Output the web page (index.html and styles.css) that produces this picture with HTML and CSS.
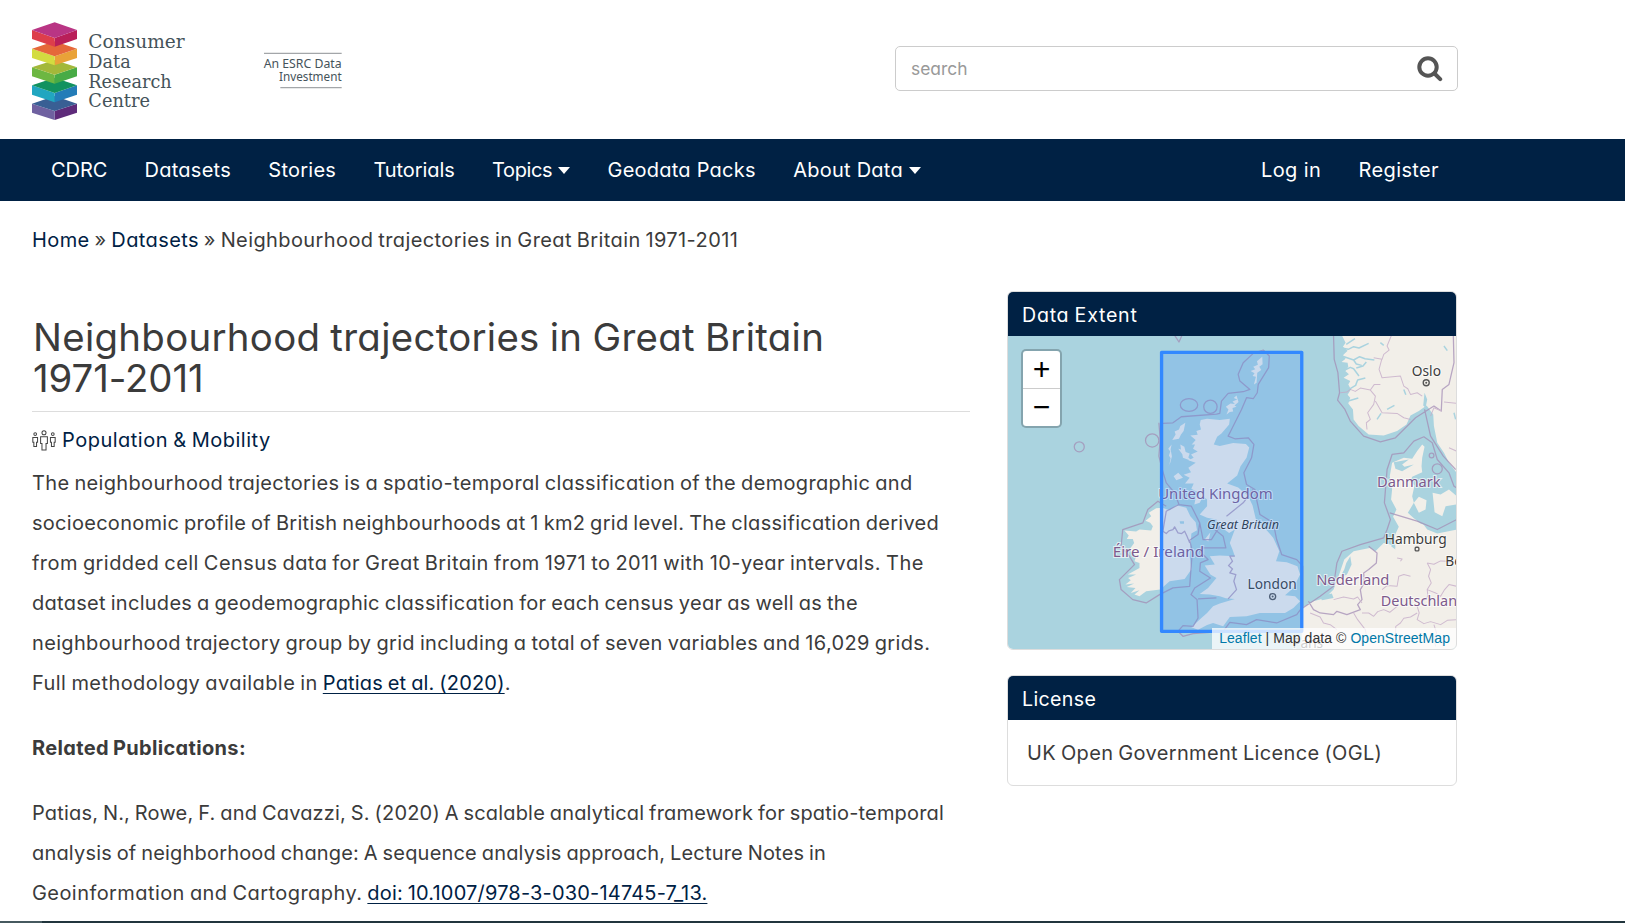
FILE: index.html
```html
<!DOCTYPE html>
<html lang="en">
<head>
<meta charset="utf-8">
<title>Neighbourhood trajectories in Great Britain 1971-2011 | CDRC Data</title>
<link rel="stylesheet" href="styles.css">
</head>
<body>
<header class="masthead">
  <svg class="logo" viewBox="0 0 1050 417" width="350" height="139" role="img" aria-label="Consumer Data Research Centre">
    <path fill="#5e2b7a" d="M164 333 231 311V338L164 360Z"/><path fill="#6f61a0" d="M96 311 164 333V360L96 338Z"/><path fill="#395f94" d="M164 288 231 311 164 333 96 311Z"/>
    <path fill="#237cb8" d="M164 279 231 256V284L164 307Z"/><path fill="#21a6c0" d="M96 256 164 279V307L96 284Z"/><path fill="#12925f" d="M164 233 231 256 164 279 96 256Z"/>
    <path fill="#48ab46" d="M164 224 231 202V229L164 251Z"/><path fill="#6db742" d="M96 202 164 224V251L96 229Z"/><path fill="#a3b83a" d="M164 180 231 202 164 224 96 202Z"/>
    <path fill="#e9a238" d="M164 169 231 146V174L164 196Z"/><path fill="#d3dc40" d="M96 146 164 169V196L96 174Z"/><path fill="#e5683a" d="M164 124 231 146 164 169 96 146Z"/>
    <path fill="#b91f59" d="M164 114 231 90V117L164 140Z"/><path fill="#dd3e4b" d="M96 90 164 114V140L96 117Z"/><path fill="#b93584" d="M164 67 231 90 164 114 96 90Z"/>
    <g class="logo-name">
      <text x="265" y="145" textLength="289" lengthAdjust="spacingAndGlyphs">Consumer</text>
      <text x="265" y="204" textLength="127" lengthAdjust="spacingAndGlyphs">Data</text>
      <text x="265" y="263" textLength="250" lengthAdjust="spacingAndGlyphs">Research</text>
      <text x="265" y="322" textLength="185" lengthAdjust="spacingAndGlyphs">Centre</text>
    </g>
    <path fill="none" stroke="#a3a6a9" stroke-width="4" d="M792 160H1025M841 263H1025"/>
    <g class="logo-tag">
      <text x="791" y="204" textLength="234" lengthAdjust="spacingAndGlyphs">An ESRC Data</text>
      <text x="837" y="244" textLength="188" lengthAdjust="spacingAndGlyphs">Investment</text>
    </g>
  </svg>
  <form class="search">
    <input class="search-input" type="text" placeholder="search" aria-label="search">
    <svg class="search-icon" viewBox="0 0 26 26" width="26" height="26"><circle cx="11" cy="11" r="8.7"/><path d="M17.5 17.5 23.2 23.2"/></svg>
  </form>
</header>

<nav class="navbar">
  <ul class="nav">
    <li><a class="flat">CDRC</a></li>
    <li><a>Datasets</a></li>
    <li><a>Stories</a></li>
    <li><a class="flat">Tutorials</a></li>
    <li><a class="narrow">Topics</a><i class="caret"></i></li>
    <li><a>Geodata Packs</a></li>
    <li><a>About Data</a><i class="caret"></i></li>
  </ul>
  <ul class="nav account">
    <li><a>Log in</a></li>
    <li><a>Register</a></li>
  </ul>
</nav>

<div class="breadcrumb"><a>Home</a> » <a>Datasets</a> » Neighbourhood trajectories in Great Britain 1971-2011</div>

<div class="page">
  <main class="content">
    <h1 class="title">Neighbourhood trajectories in Great Britain<br><span class="flat">1971-2011</span></h1>
    <div class="topic">
      <svg class="topic-icon" viewBox="0 0 70 62" width="24" height="21"><circle cx="35" cy="8" r="6"/><path d="M25 20H45V40H41V59H29V40H25Z"/><circle cx="9" cy="12" r="4"/><path d="M2 22H16V36H13V49H5V36H2Z"/><circle cx="61" cy="12" r="4"/><path d="M54 22H68V36H65V49H57V36H54Z"/></svg>
      <a>Population &amp; Mobility</a>
    </div>
    <p class="text">
      The neighbourhood trajectories is a spatio-temporal classification of the demographic and<br>
      <span class="snug">socioeconomic profile of British neighbourhoods at 1 km2 grid level. The classification derived</span><br>
      <span class="loose">from gridded cell Census data for Great Britain from 1971 to 2011 with 10-year intervals. The</span><br>
      <span class="snug">dataset includes a geodemographic classification for each census year as well as the</span><br>
      neighbourhood trajectory group by grid including a total of seven variables and 16,029 grids.<br>
      <span class="loose">Full methodology available in</span> <span class="tight"><a class="link">Patias et al. (2020)</a>.</span>
    </p>
    <p class="text"><strong>Related Publications:</strong></p>
    <p class="text">
      <span class="tight">Patias, N., Rowe, F. and Cavazzi, S. (2020) A scalable analytical framework for spatio-temporal</span><br>
      <span class="tight">analysis of neighborhood change: A sequence analysis approach, Lecture Notes in</span><br>
      <span class="loose">Geoinformation and Cartography.</span> <a class="link tight">doi: 10.1007/978-3-030-14745-7_13.</a>
    </p>
  </main>

  <aside class="sidebar">
    <section class="panel">
      <h2 class="panel-head wide">Data Extent</h2>
      <div class="map">
        <svg class="map-canvas" viewBox="-333 20 1339 938" preserveAspectRatio="none">
          <g class="land">
            <path d="M243 272 262 268 300 272 330 268 328 285 305 312 292 322 282 345 300 350 340 341 378 344 388 354 380 385 362 410 352 438 322 462 355 474 385 500 398 528 408 570 440 602 460 625 478 665 468 695 500 698 532 710 540 735 520 775 495 797 525 800 540 815 520 835 495 850 420 850 380 860 330 862 310 890 280 880 262 886 235 900 215 893 245 865 262 850 280 830 300 822 345 808 318 806 300 800 270 795 240 793 265 775 290 745 272 735 255 708 285 705 270 680 300 678 345 680 338 660 330 640 345 600 328 610 300 590 290 570 262 565 240 555 262 530 262 510 250 500 240 520 224 525 228 505 240 490 226 484 215 478 222 462 196 462 210 445 192 436 214 428 206 415 228 400 206 392 222 385 214 375 234 366 220 358 226 345 216 345 228 332 212 318 234 316 230 305 244 300 240 285Z"/>
            <path d="M197 280 182 290 178 300 165 306 168 315 158 332 178 328 184 315 192 305ZM156 345 146 358 152 366 148 378 153 386 150 402 146 410 152 400 157 380 153 360ZM176 358 184 360 182 345 194 352 198 368 210 372 206 384 218 395 204 390 190 385 188 374ZM427 82 411 96 414 106 400 112 406 120 392 125 404 132 398 140 408 142 402 165 410 160 412 130 424 122 418 112 428 105ZM350 198 342 206 352 210 338 216 345 224 332 222 318 232 326 240 320 255 330 248 340 246 338 236 350 232 344 228 356 218ZM162 440 176 430 190 445 170 452ZM255 630 272 608 266 636Z"/>
            <path d="M128 535 150 542 170 527 200 535 212 560 228 578 232 602 215 612 213 640 210 680 215 720 195 748 150 755 122 780 80 785 60 800 45 795 60 782 34 790 48 775 22 772 44 762 18 765 34 752 26 745 50 735 25 735 60 715 60 700 45 695 50 680 30 660 44 640 40 628 22 628 28 618 15 603 50 606 60 600 95 603 100 590 92 580 78 574 95 560 88 550 95 545 110 536Z"/>
            <path d="M665 18H1008V430L985 400 970 370 950 340 940 290 938 255 918 228 895 245 870 258 858 285 830 305 790 318 745 315 715 290 700 270 698 240 684 222 690 205 682 196 692 180 684 165 690 155 670 145 686 135 675 125 684 112 682 100 664 98 676 88 668 78 682 64 668 52 676 40Z"/>
            <path d="M905 345 912 352 905 385 903 410 905 428 875 442 870 455 882 468 875 500 880 520 862 550 880 566 900 582 950 600 1008 590V959H545V835L580 815 615 805 640 780 655 740 672 690 700 665 748 655 765 665 790 640 810 645 825 655 822 620 835 592 818 562 828 540 812 510 815 480 808 440 815 400 850 385 875 388 890 365ZM880 520 895 502 918 512 915 540 895 550ZM936 490 960 495 985 480 1008 500 1008 525 975 530 965 560 942 548Z"/>
          </g>
          <path class="water" d="M678 700 690 680 694 705 680 735 658 745 672 720ZM820 398 865 390 845 405 852 412 880 405 845 425 825 418ZM905 580 920 600 950 612 1008 600V560L960 580 930 560ZM600 800 635 792 640 805 605 812ZM180 575H193V583H182ZM812 650 825 660 820 640ZM915 235 920 210 912 190 908 228Z"/>
          <path class="fjord" d="M660 55 684 60 700 52 716 56 745 42M665 80 700 92 718 82 734 88 762 92M700 92 708 104 724 108M668 125 690 114 700 118 716 140M686 180 706 168 712 152 735 146M678 45 704 28M684 215 714 206M708 116 728 110 738 98M770 270 782 252M800 240 822 228M970 50 980 64M1000 250 1005 270M850 180 856 196M780 40 790 48"/>
          <g class="border">
            <path d="M640 18 642 90 653 130 658 190 652 212 674 240 690 275 730 320 780 337 825 325 885 265 940 230 962 245 965 180 985 165 1000 100 998 18M912 240 930 320 968 380 1005 420M130 282 160 280 185 262 290 254 300 252 305 215 325 192 370 187 390 180 360 155 355 135 370 100 400 72 430 62 448 80 446 115 415 165 412 190 400 208 380 205 365 240 335 300 325 320 345 328 385 325 402 345 395 385 372 430 380 465 405 480 410 510 420 555 460 580 470 630 485 675 530 690 548 710 548 830 530 855 470 880 410 870 380 885 330 878 310 905 220 912 190 920 175 905 190 888 220 890 235 865 232 810 214 795 225 775 272 745 240 725 242 700 265 690 240 665 245 655 290 655 318 655 310 620 285 600"/>
            <path d="M118 280 122 330 118 380 128 420 140 460 165 490 178 525 215 530 240 580 235 615 210 632 218 665 210 770 160 775 120 795 80 820 40 810 5 780 0 750 45 705 30 680 5 650 10 600 70 580 85 540 115 515 140 530M240 580 250 630 275 630 300 590M130 605 140 612 148 604 160 600 165 592 175 610 186 612 195 605 202 620 210 640M178 525 140 545 130 605M400 480 370 520 320 560M345 680 330 680 338 695 326 708 338 718 330 730 348 735 342 755 350 780 325 808M235 808 290 805M548 835 600 800 640 770 650 700 665 665 720 645 790 625 800 600 810 570 792 520 800 420 815 375 850 370 880 335 910 322 935 340 950 390 985 430 1000 470 1008 475M808 550 890 575 950 600 1008 570M745 650 770 670 768 700 745 720 730 730 732 760 720 780 725 810 712 825 720 840 680 855 650 845 640 855 600 850 580 840 565 815"/>
            <path d="M813 18 800 50 806 62 790 75 785 90 760 85M784 90 776 120 785 145 840 140 850 170 862 178 870 195 890 190 905 200M660 190 680 188 690 180 705 186 720 176 750 182 762 165 780 165M750 182 765 200 760 225 742 250 750 270 738 280 740 300M765 215 785 250 830 252 850 265 870 270M962 245 940 235 930 260M1008 222 970 218M985 355 1008 365M785 780 800 768 830 770 835 740 850 735 870 740M725 850 745 850 760 860 772 846 790 840 808 848 830 830M920 700 930 720 924 740 932 760 920 780 922 800 890 830 896 850 890 870 910 882 930 876 960 885 980 872 1008 870M920 700 940 704 960 694 980 695 1008 700M830 685 845 688 840 695M640 810 670 802 700 808 712 802 725 820M570 850 600 862 610 880 630 885 650 900M700 850 712 870 735 900 740 930M890 850 870 862 850 866 840 880 826 890 825 920M940 885 948 910 940 925 945 950M920 780 945 790 960 800 972 780 985 765 1008 770" class="thin"/>
            <ellipse cx="208" cy="227" rx="26" ry="19"/><circle cx="272" cy="232" r="20"/><circle cx="98" cy="333" r="20"/><circle cx="-120" cy="352" r="15"/><circle cx="950" cy="418" r="15"/><circle cx="933" cy="378" r="7"/><path d="M165 18 178 38 187 18"/>
          </g>
          <g class="country">
            <text x="116" y="509" textLength="342" lengthAdjust="spacingAndGlyphs">United Kingdom</text><text x="-20" y="681" textLength="273" lengthAdjust="spacingAndGlyphs">Éire / Ireland</text><text x="770" y="473" textLength="190" lengthAdjust="spacingAndGlyphs">Danmark</text><text x="588" y="765" textLength="219" lengthAdjust="spacingAndGlyphs">Nederland</text><text x="781" y="828" textLength="255" lengthAdjust="spacingAndGlyphs">Deutschland</text>
          </g>
          <text class="island" x="262" y="598" textLength="215" lengthAdjust="spacingAndGlyphs">Great Britain</text>
          <g class="city"><text x="874" y="140" textLength="87" lengthAdjust="spacingAndGlyphs">Oslo</text><text x="793" y="644" textLength="185" lengthAdjust="spacingAndGlyphs">Hamburg</text><text x="383" y="779" textLength="147" lengthAdjust="spacingAndGlyphs">London</text><text x="974" y="709">Berlin</text><text x="517" y="954" textLength="92">Paris</text></g>
          <g class="town"><circle cx="917" cy="160" r="9"/><circle class="dot" cx="917" cy="160" r="3"/><circle cx="458" cy="801" r="9"/><circle class="dot" cx="458" cy="801" r="3"/><rect x="884" y="653" width="11" height="11" rx="3"/></g>
          <rect class="extent" x="126" y="69" width="419" height="836"/>
        </svg>
        <div class="zoom"><a>+</a><a>−</a></div>
        <div class="attribution"><a>Leaflet</a> | Map data © <a>OpenStreetMap</a></div>
      </div>
    </section>
    <section class="panel">
      <h2 class="panel-head">License</h2>
      <div class="panel-body">UK Open Government Licence (OGL)</div>
    </section>
  </aside>
</div>
<div class="footer-edge"><span></span></div>
</body>
</html>
```
FILE: styles.css
```css
* { box-sizing: border-box; }
body {
  margin: 0;
  height: 923px;
  overflow: hidden;
  position: relative;
  background: #fff;
  color: #3b3b3b;
  font-family: Inter, "Noto Sans", sans-serif;
  font-size: 20px;
  font-feature-settings: "cv11", "calt" 0;
  letter-spacing: .34px;
  word-spacing: -1px;
}
svg { letter-spacing: 0; word-spacing: 0; }
.flat { letter-spacing: -.08px; }
.narrow { letter-spacing: -.4px; }
.tight { letter-spacing: .18px; }
.snug { letter-spacing: .28px; }
.loose { letter-spacing: .43px; }
.wide { letter-spacing: .75px; }
.masthead { display: flex; height: 139px; }
.logo-name { font: 56px "DejaVu Serif", serif; fill: #45535a; }
.logo-tag { font: 37px "Noto Sans", sans-serif; fill: #45535a; }
.search {
  display: flex;
  align-items: center;
  width: 563px;
  height: 45px;
  margin: 46px 0 0 545px;
  padding: 0 14px 0 15px;
  border: 1px solid #ccc;
  border-radius: 5px;
}
.search-input { flex: 1; min-width: 0; padding: 0; border: 0; outline: 0; font: inherit; font-size: 17.4px; }
.search-input::placeholder { color: #999; opacity: 1; }
.search-icon { fill: none; stroke: #555; stroke-width: 4; stroke-linecap: round; }
.navbar {
  display: flex;
  justify-content: space-between;
  height: 62px;
  padding: 0 186px 0 51px;
  background: #002144;
  color: #fff;
  letter-spacing: .24px;
  word-spacing: 0;
}
.nav { display: flex; align-items: center; gap: 37.4px; margin: 0; padding: 0; list-style: none; }
.account { letter-spacing: .38px; }
.nav li { display: flex; align-items: center; white-space: nowrap; }
.caret { margin-left: 6px; border: 6px solid transparent; border-top: 7px solid #fff; border-bottom: 0; }
.breadcrumb { height: 90px; padding: 20px 0 0 32px; line-height: 38px; letter-spacing: .4px; word-spacing: -1.2px; }
.breadcrumb a, .topic a, .link { color: #002144; }
.topic a { letter-spacing: .5px; }
.page { display: flex; align-items: flex-start; gap: 37px; padding-left: 32px; white-space: nowrap; }
.content { width: 938px; padding-top: 26px; }
.title {
  height: 95px;
  margin: 0;
  padding-left: 1px;
  border-bottom: 1px solid #ddd;
  font-size: 38.4px;
  font-weight: 400;
  line-height: 41px;
  letter-spacing: .3px;
}
.topic { display: flex; align-items: center; gap: 6px; height: 56px; }
.topic-icon { fill: none; stroke: #444; stroke-width: 3; }
.text { margin: -5px 0 25px; line-height: 40px; }
.text + .text { margin-top: 0; }
.link { text-decoration: underline; text-decoration-thickness: 1px; text-underline-offset: 3px; }
.sidebar { display: flex; flex-direction: column; gap: 25px; width: 450px; }
.panel { border: 1px solid #ddd; border-radius: 6px; overflow: hidden; }
.panel-head {
  height: 44px;
  margin: 0;
  padding: 0 14px;
  background: #002144;
  color: #fff;
  font-size: 19.6px;
  font-weight: 400;
  line-height: 46px;
}
.panel-body { height: 65px; padding: 0 19px; line-height: 66px; }
.map { position: relative; height: 313px; background: #aad3df; }
.map-canvas { display: block; width: 448px; height: 313px; }
.land { fill: #f2efe9; }
.water { fill: #aad3df; }
.fjord { fill: none; stroke: #aad3df; stroke-width: 4.5; stroke-linejoin: round; }
.border { fill: none; stroke: #a38db5; stroke-width: 3.8; stroke-linejoin: round; opacity: .75; }
.thin { stroke: #c3a9c6; stroke-width: 3; }
.country, .city, .island {
  font-family: "Noto Sans", sans-serif;
  font-size: 41px;
  stroke: #fff;
  stroke-opacity: .65;
  stroke-width: 6;
  paint-order: stroke;
}
.country { fill: #7d5a8c; }
.city { fill: #3c3c3c; font-size: 41px; }
.island { fill: #333; font-size: 38px; font-style: italic; }
.town { fill: none; stroke: #555; stroke-width: 4; }
.dot { fill: #555; stroke: none; }
.extent { fill: #3388ff; fill-opacity: .2; stroke: #3388ff; stroke-width: 10; stroke-linejoin: round; }
.zoom {
  position: absolute;
  top: 13px;
  left: 13px;
  width: 41px;
  border: 2px solid rgba(0, 0, 0, .22);
  border-radius: 5px;
  background: #fff;
  background-clip: padding-box;
  letter-spacing: 0;
}
.zoom a { display: block; height: 37px; color: #000; font: 400 31px/35px "Noto Sans", sans-serif; text-align: center; }
.zoom a + a { height: 38px; border-top: 1px solid #ccc; line-height: 34px; }
.attribution {
  position: absolute;
  right: 0;
  bottom: 0;
  padding: 0 6px 0 7px;
  background: rgba(255, 255, 255, .75);
  color: #333;
  font: 14px/21px "Liberation Sans", sans-serif;
  letter-spacing: .06px;
  word-spacing: 0;
}
.attribution a { color: #0078a8; }
.footer-edge { position: absolute; left: 0; right: 0; bottom: 0; height: 2px; background: #21353d; }
.footer-edge span { display: block; width: 42px; height: 2px; background: #46595f; }
```
